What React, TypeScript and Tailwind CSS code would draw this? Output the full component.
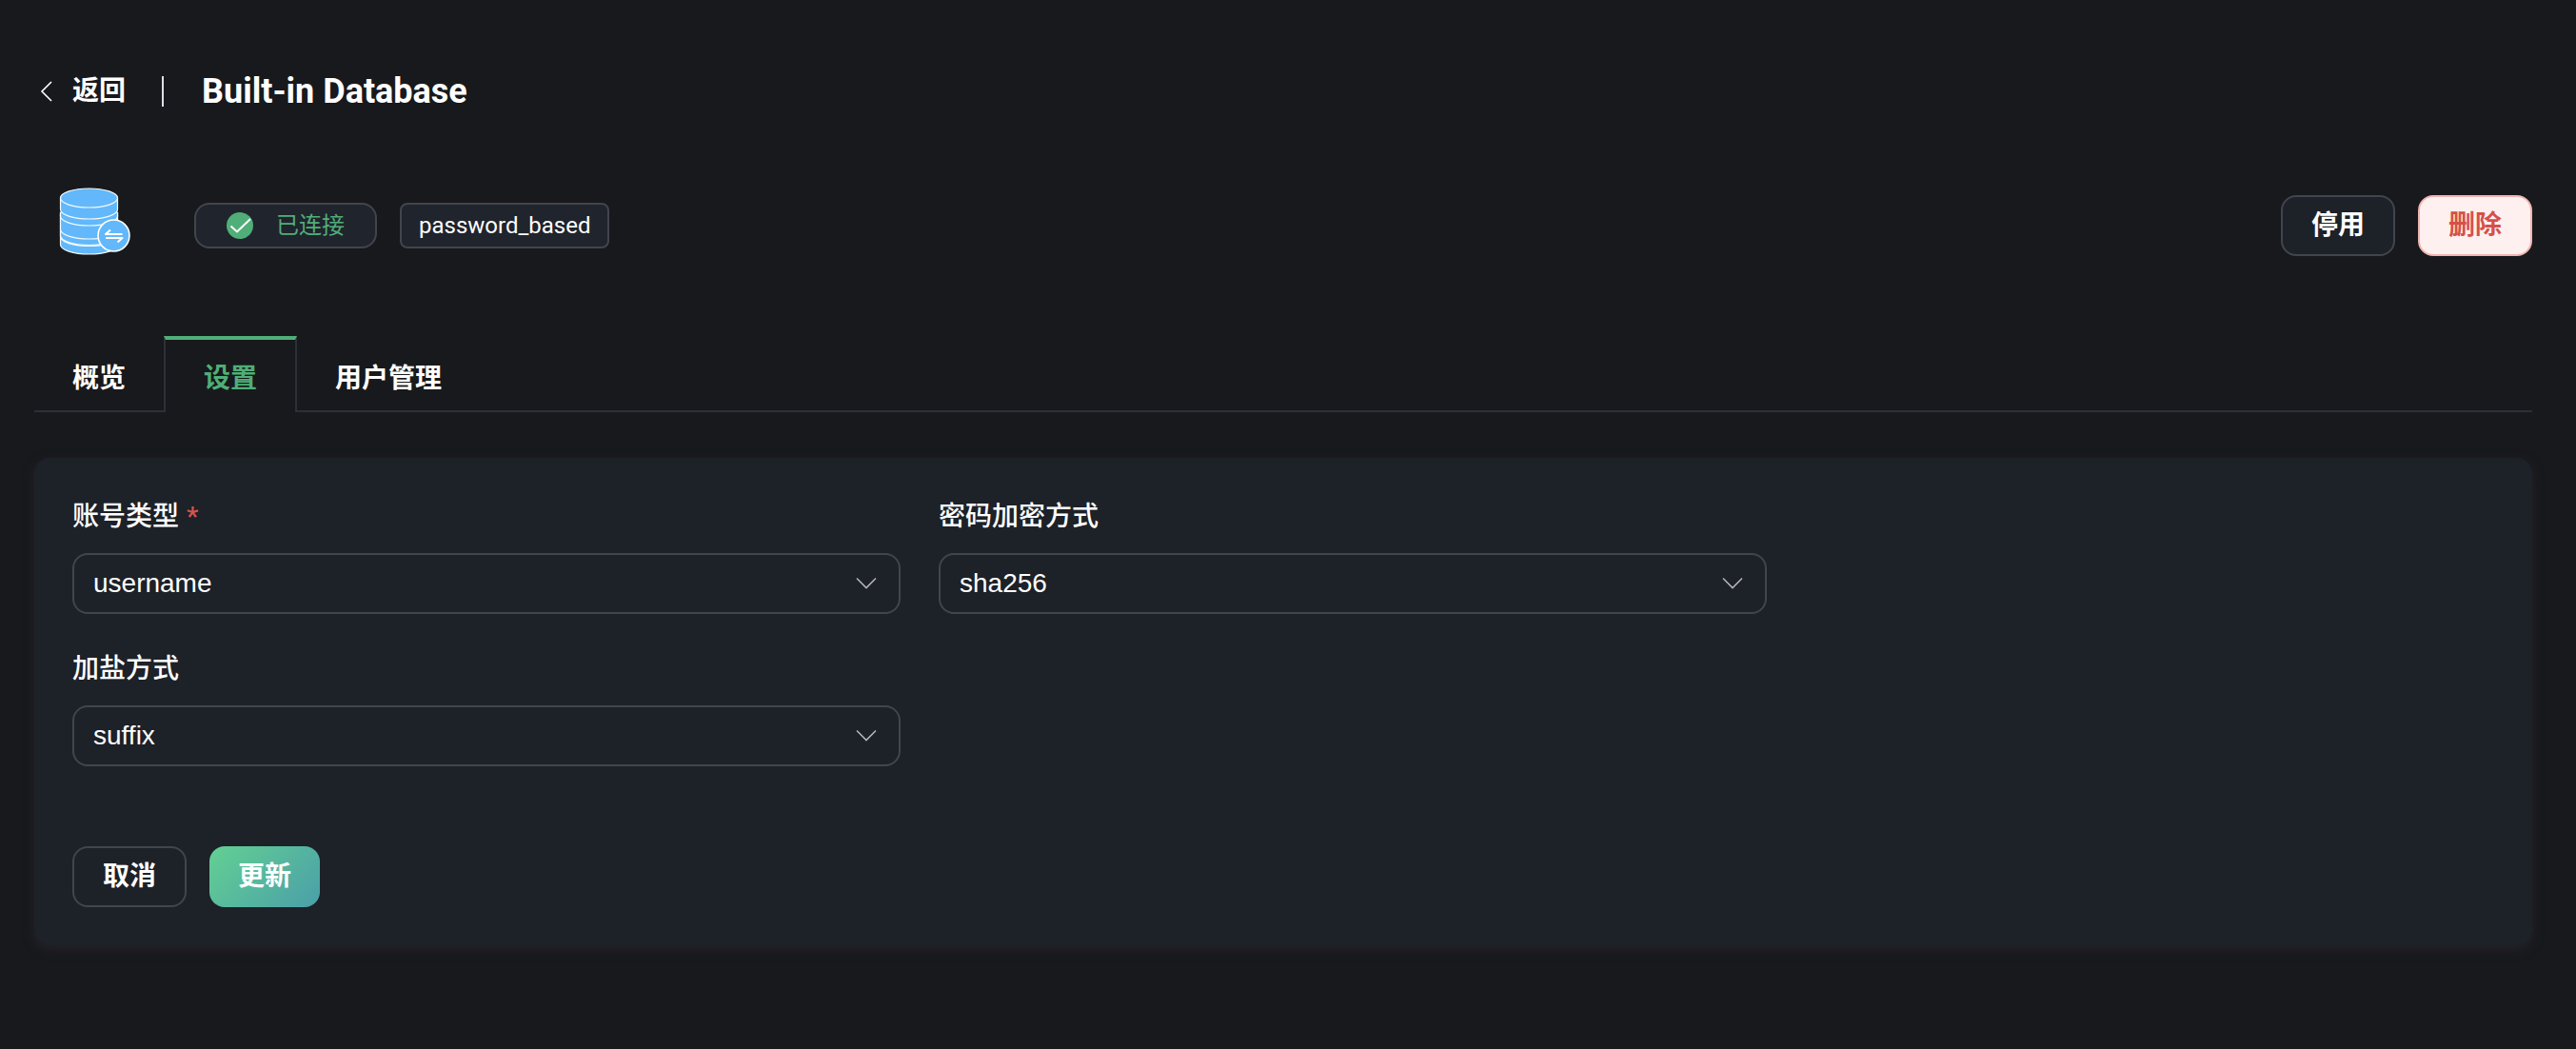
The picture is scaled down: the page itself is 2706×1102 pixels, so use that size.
import { useState } from 'react';
import type { ReactNode } from 'react';

const buttonBase =
  "flex h-16 items-center justify-center rounded-2xl px-[30px] text-[28px] leading-10 font-semibold";

function DatabaseIcon() {
  return (
    <svg viewBox="0 0 76 72" className="h-[72px] w-[76px] shrink-0" aria-hidden="true">
      <g fill="#62b8fa" stroke="#f4faff" strokeWidth="1.2">
        <path d="M1.500 51v9c0 5.500 13.400 10 30 10s30-4.500 30-10v-9z" />
        <path d="M1.500 29v22.500c0 5.500 13.400 10 30 10s30-4.500 30-10V29z" />
        <path d="M1.500 44.500v6c0 5.500 13.400 10 30 10s30-4.500 30-10v-6" />
        <path d="M1.500 27v17c0 5.500 13.400 10 30 10s30-4.500 30-10V27z" />
        <path d="M1.500 26v4c0 5.500 13.400 10 30 10s30-4.500 30-10v-4z" />
        <path d="M1.500 11v12c0 5.500 13.400 10 30 10s30-4.500 30-10V11z" />
        <ellipse cx="31.500" cy="11" rx="30" ry="10" />
      </g>
      <circle cx="57.500" cy="50.500" r="16.500" fill="#62b8fa" stroke="#fff" strokeWidth="1.600" />
      <path
        d="M54 44.500l-5 4.500h17.500M49 53h17.500l-5 4.500"
        fill="none"
        stroke="#fff"
        strokeWidth="2"
        strokeLinejoin="round"
      />
    </svg>
  );
}

function CheckCircle() {
  return (
    <svg viewBox="0 0 28 28" className="size-7 shrink-0" aria-hidden="true">
      <circle cx="14" cy="14" r="14" fill="#50ae78" />
      <path d="M4.500 14.500l6.500 6L25 7" fill="none" stroke="#fff" strokeWidth="2" />
    </svg>
  );
}

interface FieldProps {
  id: string;
  label: string;
  required?: boolean;
  options: string[];
}

function SelectField({ id, label, required, options }: FieldProps) {
  const [value, setValue] = useState(options[0]);
  return (
    <div className="flex flex-col gap-[18px]">
      <label htmlFor={id} className="text-[28px] leading-10 font-medium text-white">
        {label}
        {required && <span className="ml-2 text-[#d9534c]">*</span>}
      </label>
      <div className="grid items-center">
        <select
          id={id}
          value={value}
          onChange={(e) => setValue(e.target.value)}
          className="col-start-1 row-start-1 h-16 w-full appearance-none rounded-2xl border-2 border-[#42454d] bg-transparent px-5 font-['Liberation_Sans','Noto_Sans_CJK_SC',sans-serif] text-[28px] text-white"
        >
          {options.map((o) => (
            <option key={o} className="bg-[#1d2128]">
              {o}
            </option>
          ))}
        </select>
        <svg
          viewBox="0 0 24 16"
          className="pointer-events-none col-start-1 row-start-1 mr-6 h-4 w-6 justify-self-end"
          aria-hidden="true"
        >
          <path d="M2 2.500l10 10 10-10" fill="none" stroke="#b2b4b9" strokeWidth="1.600" />
        </svg>
      </div>
    </div>
  );
}

function Tab({ active, children, onClick }: { active: boolean; children: ReactNode; onClick: () => void }) {
  return (
    <button
      type="button"
      role="tab"
      aria-selected={active}
      onClick={onClick}
      className={
        active
          ? 'h-20 border-x-2 border-t-4 border-[#2c3138] border-t-[#50ae78] px-10 pt-[6px] text-[#50ae78]'
          : 'h-20 border-b-2 border-[#2c3138] px-10 pt-3 text-white'
      }
    >
      {children}
    </button>
  );
}

export default function App() {
  const [tab, setTab] = useState('设置');
  return (
    <main className="min-h-screen bg-[#18191c] pt-[68px] pr-[46px] pb-12 pl-9 font-[Roboto,'Noto_Sans_CJK_SC',sans-serif] text-white">
      <header className="flex h-14 items-center">
        <a href="#back" className="flex items-center gap-5 pl-1 text-[28px] leading-10 font-semibold">
          <svg viewBox="0 0 16 24" className="h-6 w-4" aria-hidden="true">
            <path d="M14 2L4 12l10 10" fill="none" stroke="#fff" strokeWidth="1.600" />
          </svg>
          返回
        </a>
        <span className="mr-10 ml-[38px] h-8 w-0.5 bg-[#dcdfe6]" />
        <h1 className="text-[36px] leading-[56px] font-bold">Built-in Database</h1>
      </header>

      <section className="mt-[73px] flex h-[76px] items-center">
        <div className="ml-[26px] self-start">
          <DatabaseIcon />
        </div>
        <div className="ml-[66px] flex items-center gap-6 pt-1">
          <span className="flex h-12 items-center gap-6 rounded-2xl border-2 border-[#42454d] bg-[#20242d] px-8 text-[24px] text-[#50ae78]">
            <CheckCircle />
            已连接
          </span>
          <span className="flex h-12 items-center rounded-lg border-2 border-[#42454d] bg-[#20242d] px-[18px] text-[24px]">
            password_based
          </span>
        </div>
        <div className="ml-auto flex gap-6 pt-1">
          <button type="button" className={`${buttonBase} border-2 border-[#42454d] bg-[#1d2128]`}>
            停用
          </button>
          <button type="button" className={`${buttonBase} border-2 border-[#f2b4b1] bg-[#fdf0ef] text-[#d5504a]`}>
            删除
          </button>
        </div>
      </section>

      <nav role="tablist" className="mt-20 flex text-[28px] leading-10 font-semibold">
        {['概览', '设置', '用户管理'].map((t) => (
          <Tab key={t} active={t === tab} onClick={() => setTab(t)}>
            {t}
          </Tab>
        ))}
        <span className="grow border-b-2 border-[#2c3138]" />
      </nav>

      <form
        onSubmit={(e) => e.preventDefault()}
        className="mt-12 rounded-2xl bg-[#1d2128] px-10 pt-[42px] pb-10 shadow-[0_4px_12px_#24222a]"
      >
        <div className="grid grid-cols-[34.2%_34.2%] gap-x-10 gap-y-[38px]">
          <SelectField id="account" label="账号类型" required options={['username', 'clientid']} />
          <SelectField id="hash" label="密码加密方式" options={['sha256', 'plain', 'md5', 'sha', 'sha512', 'bcrypt', 'pbkdf2']} />
          <SelectField id="salt" label="加盐方式" options={['suffix', 'prefix', 'disable']} />
        </div>
        <div className="mt-[84px] flex gap-6">
          <button type="button" className={`${buttonBase} border-2 border-[#42454d]`}>
            取消
          </button>
          <button type="submit" className={`${buttonBase} bg-linear-[135deg,#63d093,#4a9fa9]`}>
            更新
          </button>
        </div>
      </form>
    </main>
  );
}
